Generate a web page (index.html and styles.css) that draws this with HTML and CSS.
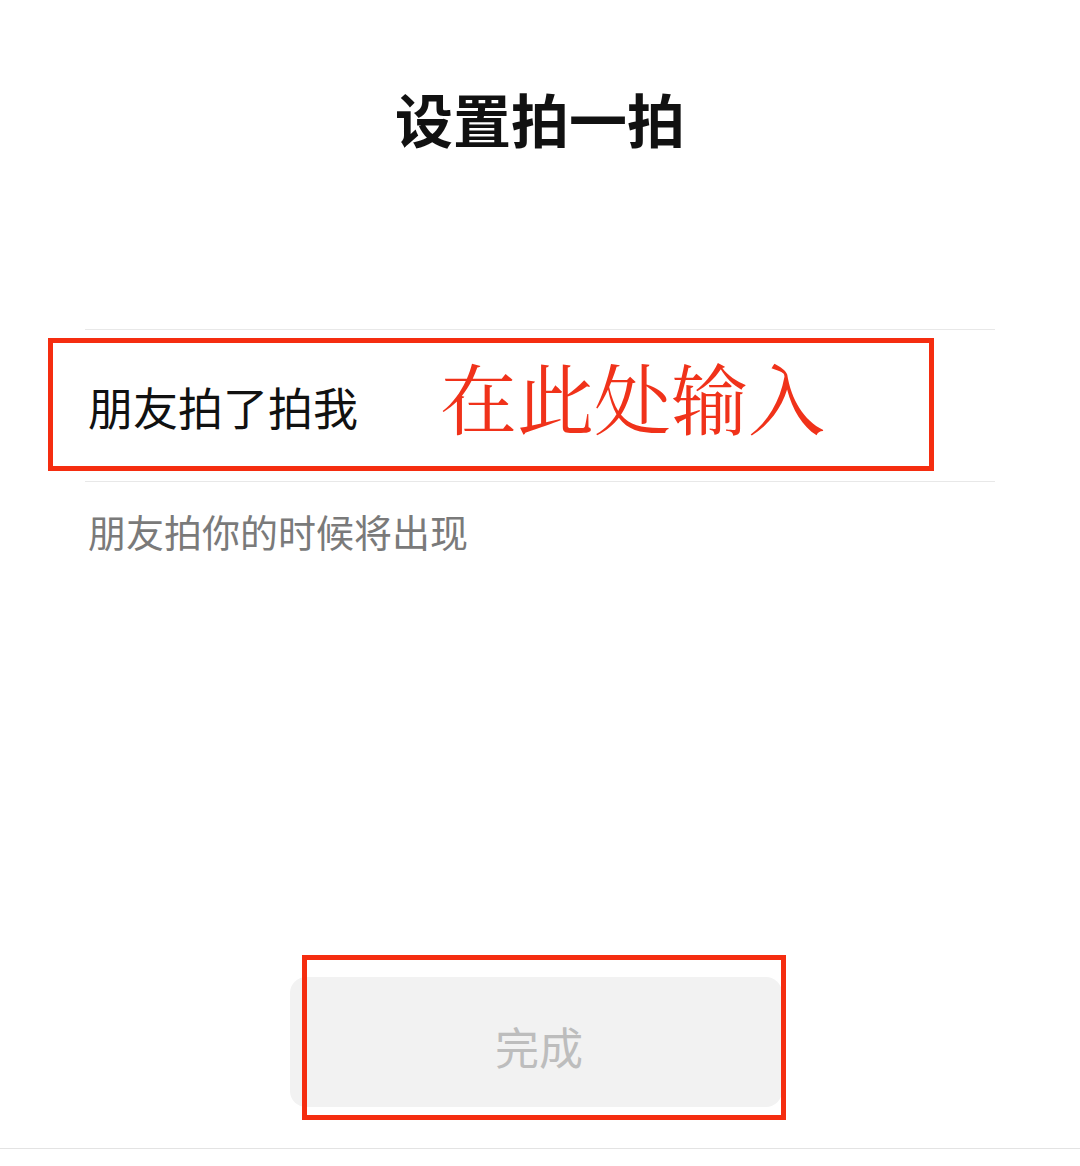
FILE: index.html
```html
<!DOCTYPE html>
<html lang="zh-CN">
<head>
<meta charset="utf-8">
<title>设置拍一拍</title>
<link rel="stylesheet" href="styles.css">
</head>
<body>
<div class="page">
  <h1 class="title">设置拍一拍</h1>
  <div class="form">
    <div class="row">
      <span class="value">朋友拍了拍我</span>
      <span class="note">在此处输入</span>
      <div class="mark mark-row"></div>
    </div>
    <p class="hint">朋友拍你的时候将出现</p>
  </div>
  <div class="footer">
    <div class="btn-wrap">
      <button class="btn">完成</button>
      <div class="mark mark-btn"></div>
    </div>
  </div>
  <div class="bottom-line"></div>
</div>
</body>
</html>
```

FILE: styles.css
```css
html, body {
  margin: 0;
  padding: 0;
  background: #ffffff;
}
body {
  font-family: "Noto Sans CJK SC", "Noto Sans", sans-serif;
  color: #1a1a1a;
}
.page {
  width: 1080px;
  height: 1166px;
  display: flex;
  flex-direction: column;
}
.title {
  margin: 85px 0 0;
  height: 66px;
  line-height: 66px;
  font-size: 58px;
  font-weight: 700;
  text-align: center;
  color: #111;
  letter-spacing: 0;
}
.form {
  margin: 178px 85px 0 85px;
  border-top: 1px solid #e8e8e8;
}
.row {
  position: relative;
  height: 151px;
  border-bottom: 1px solid #e8e8e8;
  display: flex;
  align-items: center;
  padding-left: 3px;
}
.value {
  font-size: 45px;
  line-height: 1;
  color: #111;
  margin-top: 2px;
}
.note {
  font-family: "Noto Serif CJK SC", "Liberation Serif", serif;
  font-size: 77px;
  line-height: 1;
  color: #f0321a;
  margin-left: 82px;
  margin-top: -20px;
}
.mark {
  position: absolute;
  border: 5px solid #f52d10;
  box-sizing: border-box;
  pointer-events: none;
}
.mark-row {
  left: -37px;
  top: 8px;
  width: 886px;
  height: 133px;
}
.hint {
  margin: 29px 0 0 3px;
  font-size: 38px;
  line-height: 40px;
  color: #7a7a7a;
}
.footer {
  margin-top: 426px;
  padding-left: 290px;
}
.btn-wrap {
  position: relative;
  width: 492px;
  height: 130px;
}
.btn {
  display: block;
  width: 492px;
  height: 130px;
  border: none;
  border-radius: 16px;
  background: #f2f2f2;
  color: #bdbdbd;
  font-family: "Noto Sans CJK SC", "Noto Sans", sans-serif;
  font-size: 44px;
  padding: 0 0 0 6px;
  padding-top: 8px;
}
.mark-btn {
  left: 12px;
  top: -22px;
  width: 484px;
  height: 165px;
}
.bottom-line {
  margin-top: 41px;
  height: 1px;
  background: #e3e3e3;
}
```
